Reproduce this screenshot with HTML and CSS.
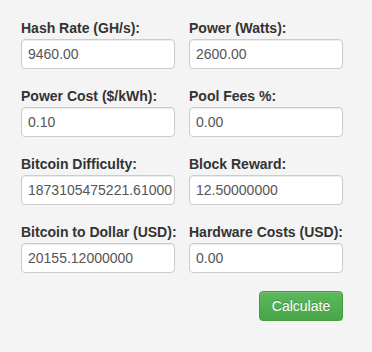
FILE: index.html
```html
<!DOCTYPE html>
<html>
<head>
    <link rel="stylesheet" href="styles.css">
</head>
<body>

    <form class="calc">
        <div class="field">
            <label for="hashrate">Hash Rate (GH/s):</label>
            <input type="text" id="hashrate" value="9460.00">
        </div>
        <div class="field">
            <label for="power">Power (Watts):</label>
            <input type="text" id="power" value="2600.00">
        </div>
        <div class="field">
            <label for="cost">Power Cost ($/kWh):</label>
            <input type="text" id="cost" value="0.10">
        </div>
        <div class="field">
            <label for="fees">Pool Fees %:</label>
            <input type="text" id="fees" value="0.00">
        </div>
        <div class="field">
            <label for="difficulty">Bitcoin Difficulty:</label>
            <input type="text" id="difficulty" value="1873105475221.61000000">
        </div>
        <div class="field">
            <label for="reward">Block Reward:</label>
            <input type="text" id="reward" value="12.50000000">
        </div>
        <div class="field">
            <label for="price">Bitcoin to Dollar (USD):</label>
            <input type="text" id="price" value="20155.12000000">
        </div>
        <div class="field">
            <label for="hardware">Hardware Costs (USD):</label>
            <input type="text" id="hardware" value="0.00">
        </div>
        <div class="actions">
            <button type="button" class="btn-calc">Calculate</button>
        </div>
    </form>

</body>
</html>
```

FILE: styles.css
```css
body {
    margin: 0;
    background-color: #f4f4f4;
    font-family: "Liberation Sans", Arial, sans-serif;
    font-size: 14px;
    color: #333;
}

.calc {
    display: grid;
    grid-template-columns: 154px 154px;
    column-gap: 14px;
    row-gap: 17px;
    width: 322px;
    margin-left: 21px;
    padding-top: 18px;
}

.field label {
    display: block;
    font-weight: bold;
    line-height: 20px;
    margin-bottom: 1px;
    white-space: nowrap;
}

.field input {
    display: block;
    box-sizing: border-box;
    width: 100%;
    height: 30px;
    padding: 0 2px 0 6px;
    font-family: "Liberation Sans", Arial, sans-serif;
    font-size: 14px;
    color: #555;
    background-color: #fff;
    border: 1px solid #ccc;
    border-radius: 4px;
    box-shadow: inset 0 1px 1px rgba(0, 0, 0, 0.075);
}

.actions {
    grid-column: 1 / 3;
    display: flex;
    justify-content: flex-end;
    padding-top: 1px;
}

.btn-calc {
    width: 84px;
    height: 30px;
    font-family: "Liberation Sans", Arial, sans-serif;
    font-size: 14px;
    color: #fff;
    text-shadow: 0 -1px 0 rgba(0, 0, 0, 0.2);
    background-image: linear-gradient(to bottom, #5cb85c 0, #48a648 100%);
    border: 1px solid #449d44;
    border-radius: 4px;
    box-shadow: inset 0 1px 0 rgba(255, 255, 255, 0.15), 0 1px 1px rgba(0, 0, 0, 0.075);
}
```
